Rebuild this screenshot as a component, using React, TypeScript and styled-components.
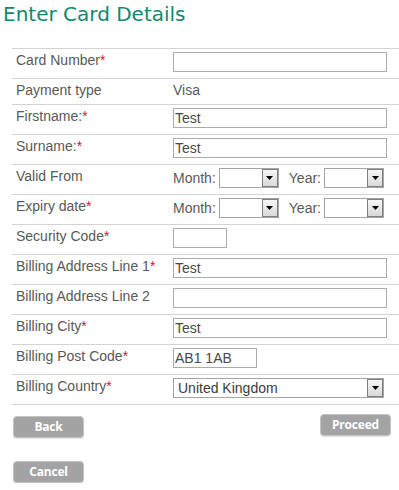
import React from "react";
import styled, { createGlobalStyle } from "styled-components";

const GlobalStyle = createGlobalStyle`
  html, body {
    margin: 0;
    padding: 0;
    background: #ffffff;
  }
  body {
    font-family: "Liberation Sans", Arial, sans-serif;
    font-size: 14px;
    color: #595959;
  }
`;

const Page = styled.div`
  padding-top: 2px;
  width: 399px;
  overflow: hidden;
`;

const Title = styled.h1`
  margin: 0 0 0 3px;
  font-family: "DejaVu Sans", Verdana, sans-serif;
  font-size: 20px;
  line-height: 24px;
  font-weight: normal;
  color: #10896f;
`;

const Form = styled.div`
  margin: 22px 0 0 12px;
  border-bottom: 1px solid #d3d3d3;
`;

const Row = styled.div`
  display: grid;
  grid-template-columns: 161px 1fr;
  border-top: 1px solid #d3d3d3;
  padding: 3px 0 6px;
  line-height: 16px;
`;

const Label = styled.div`
  padding-left: 4px;
  color: #595959;
`;

const Required = styled.span`
  color: #d4123c;
`;

const Value = styled.div`
  display: flex;
  align-items: center;
  min-height: 16px;
`;

const TextBox = styled.input<{ $w: number }>`
  box-sizing: border-box;
  width: ${(p) => p.$w}px;
  height: 20px;
  margin: 0;
  padding: 0 1px;
  border: 1px solid #a9abb0;
  font-family: "Liberation Sans", Arial, sans-serif;
  font-size: 14px;
  color: #4a4a4a;
  background: #fff;
  outline: none;
`;

const SelectBox = styled.div<{ $w: number }>`
  box-sizing: border-box;
  display: inline-flex;
  align-items: stretch;
  width: ${(p) => p.$w}px;
  height: 20px;
  border: 1px solid #a5a5a5;
  background: #fff;
`;

const SelectText = styled.span`
  flex: 1;
  padding-left: 4px;
  line-height: 18px;
  color: #3c3c3c;
  white-space: nowrap;
  overflow: hidden;
`;

const ArrowBox = styled.span`
  box-sizing: border-box;
  width: 16px;
  display: flex;
  align-items: center;
  justify-content: center;
  border: 1px solid #7f7f7f;
  background: linear-gradient(#f6f6f6, #d9d9d9);
`;

const PickerLabel = styled.span`
  margin-right: 3px;
`;

const Gap = styled.span`
  width: 10px;
`;

const Buttons = styled.div`
  display: flex;
  justify-content: space-between;
  align-items: flex-start;
  margin: 9px 8px 0 13px;
`;

const Button = styled.button<{ $offset?: number }>`
  box-sizing: border-box;
  width: 71px;
  height: 22px;
  margin: ${(p) => p.$offset || 0}px 0 0 0;
  padding: 0;
  border: 1px solid #c4c4c4;
  border-radius: 4px;
  background: #a3a3a3;
  color: #ffffff;
  font-family: "Open Sans", "DejaVu Sans", sans-serif;
  font-weight: 700;
  font-size: 12px;
  letter-spacing: -0.2px;
  line-height: 20px;
  box-shadow: 0 1px 1px rgba(0, 0, 0, 0.12);
`;

const CancelWrap = styled.div`
  margin: 23px 0 0 13px;
`;

const Arrow = () => (
  <ArrowBox>
    <svg width="7" height="4" viewBox="0 0 7 4">
      <path d="M0 0 H7 L3.5 4 Z" fill="#000" />
    </svg>
  </ArrowBox>
);

const Select = ({ w, text }: { w: number; text?: string }) => (
  <SelectBox $w={w}>
    <SelectText>{text}</SelectText>
    <Arrow />
  </SelectBox>
);

const FieldLabel = ({ text, req }: { text: string; req?: boolean }) => (
  <Label>
    {text}
    {req && <Required>*</Required>}
  </Label>
);

const DatePicker = () => (
  <Value>
    <PickerLabel>Month:</PickerLabel>
    <Select w={60} />
    <Gap />
    <PickerLabel>Year:</PickerLabel>
    <Select w={60} />
  </Value>
);

export default function App() {
  return (
    <Page>
      <GlobalStyle />
      <Title>Enter Card Details</Title>
      <Form>
        <Row>
          <FieldLabel text="Card Number" req />
          <Value><TextBox $w={214} defaultValue="" /></Value>
        </Row>
        <Row>
          <FieldLabel text="Payment type" />
          <Value>Visa</Value>
        </Row>
        <Row>
          <FieldLabel text="Firstname:" req />
          <Value><TextBox $w={214} defaultValue="Test" /></Value>
        </Row>
        <Row>
          <FieldLabel text="Surname:" req />
          <Value><TextBox $w={214} defaultValue="Test" /></Value>
        </Row>
        <Row>
          <FieldLabel text="Valid From" />
          <DatePicker />
        </Row>
        <Row>
          <FieldLabel text="Expiry date" req />
          <DatePicker />
        </Row>
        <Row>
          <FieldLabel text="Security Code" req />
          <Value><TextBox $w={54} defaultValue="" /></Value>
        </Row>
        <Row>
          <FieldLabel text="Billing Address Line 1" req />
          <Value><TextBox $w={214} defaultValue="Test" /></Value>
        </Row>
        <Row>
          <FieldLabel text="Billing Address Line 2" />
          <Value><TextBox $w={214} defaultValue="" /></Value>
        </Row>
        <Row>
          <FieldLabel text="Billing City" req />
          <Value><TextBox $w={214} defaultValue="Test" /></Value>
        </Row>
        <Row>
          <FieldLabel text="Billing Post Code" req />
          <Value><TextBox $w={84} defaultValue="AB1 1AB" /></Value>
        </Row>
        <Row>
          <FieldLabel text="Billing Country" req />
          <Value><Select w={211} text="United Kingdom" /></Value>
        </Row>
      </Form>
      <Buttons>
        <Button $offset={2}>Back</Button>
        <Button>Proceed</Button>
      </Buttons>
      <CancelWrap>
        <Button>Cancel</Button>
      </CancelWrap>
    </Page>
  );
}
